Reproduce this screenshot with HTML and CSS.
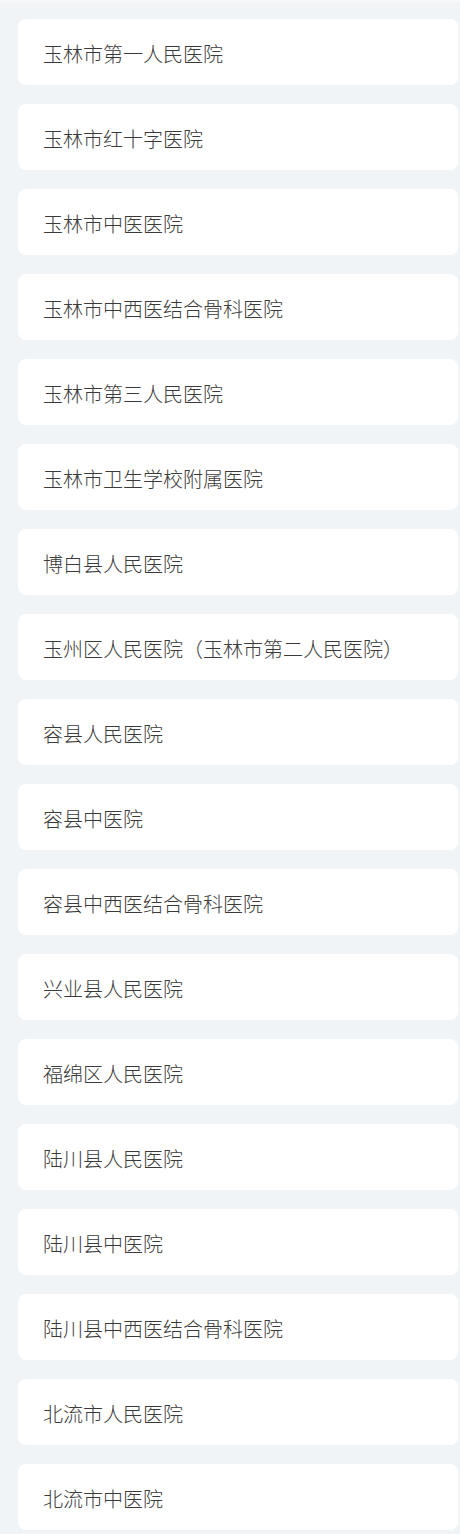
FILE: index.html
```html
<!DOCTYPE html>
<html lang="zh-CN">
<head>
<meta charset="utf-8">
<title>医院列表</title>
<link rel="stylesheet" href="styles.css">
</head>
<body>
<div class="list">
  <div class="item">玉林市第一人民医院</div>
  <div class="item">玉林市红十字医院</div>
  <div class="item">玉林市中医医院</div>
  <div class="item">玉林市中西医结合骨科医院</div>
  <div class="item">玉林市第三人民医院</div>
  <div class="item">玉林市卫生学校附属医院</div>
  <div class="item">博白县人民医院</div>
  <div class="item">玉州区人民医院（玉林市第二人民医院）</div>
  <div class="item">容县人民医院</div>
  <div class="item">容县中医院</div>
  <div class="item">容县中西医结合骨科医院</div>
  <div class="item">兴业县人民医院</div>
  <div class="item">福绵区人民医院</div>
  <div class="item">陆川县人民医院</div>
  <div class="item">陆川县中医院</div>
  <div class="item">陆川县中西医结合骨科医院</div>
  <div class="item">北流市人民医院</div>
  <div class="item">北流市中医院</div>
</div>
</body>
</html>
```

FILE: styles.css
```css
html, body {
  margin: 0;
  padding: 0;
}
body {
  background: #f0f4f7;
  font-family: "Noto Sans CJK SC", "Noto Sans", sans-serif;
  color: #3a3a3a;
  border-top: 3px solid #f5f7f9;
}
.list {
  display: flex;
  flex-direction: column;
  gap: 19px;
  padding: 16px 2px 0 18px;
}
.item {
  height: 66px;
  background: #fff;
  border-radius: 8px;
  display: flex;
  align-items: center;
  padding: 4px 0 0 25px;
  font-size: 20px;
  font-weight: 300;
  line-height: 1;
  box-sizing: border-box;
}
```
